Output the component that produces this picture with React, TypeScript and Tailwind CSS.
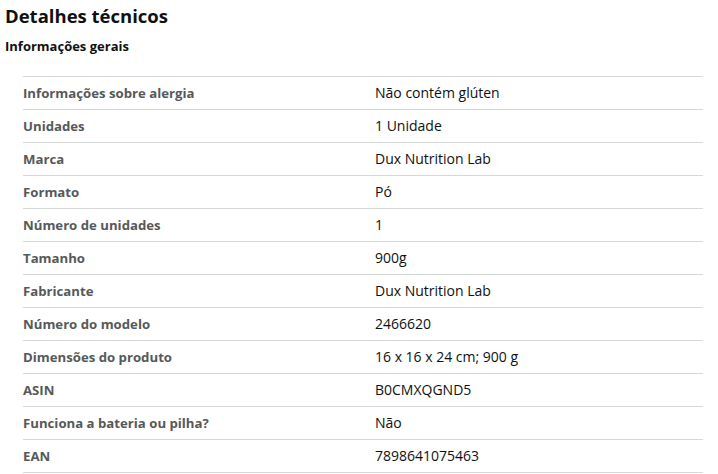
import React from "react";

const rows: [string, string][] = [
  ["Informações sobre alergia", "Não contém glúten"],
  ["Unidades", "1 Unidade"],
  ["Marca", "Dux Nutrition Lab"],
  ["Formato", "Pó"],
  ["Número de unidades", "1"],
  ["Tamanho", "900g"],
  ["Fabricante", "Dux Nutrition Lab"],
  ["Número do modelo", "2466620"],
  ["Dimensões do produto", "16 x 16 x 24 cm; 900 g"],
  ["ASIN", "B0CMXQGND5"],
  ["Funciona a bateria ou pilha?", "Não"],
  ["EAN", "7898641075463"],
];

export default function App() {
  return (
    <div className="bg-white w-[718px] h-[474px] overflow-hidden pl-[5px] pt-[3px] text-[#0f1111]" style={{ fontFamily: "'Open Sans', sans-serif" }}>
      <h2 className="text-[18.5px] font-bold leading-[26px]">Detalhes técnicos</h2>
      <h3 className="text-[13px] font-bold leading-[20px] mt-[7px]">Informações gerais</h3>
      <div className="ml-[18px] mt-[20px] w-[680px] border-b border-[#d5d9d9]">
        {rows.map(([k, v]) => (
          <div key={k} className="flex h-[33px] items-center border-t border-[#d5d9d9] leading-[20px] pb-[1px]">
            <div className="w-[352px] text-[13.2px] font-bold text-[#565959]">{k}</div>
            <div className="text-[14px] text-[#0f1111]">{v}</div>
          </div>
        ))}
      </div>
    </div>
  );
}
